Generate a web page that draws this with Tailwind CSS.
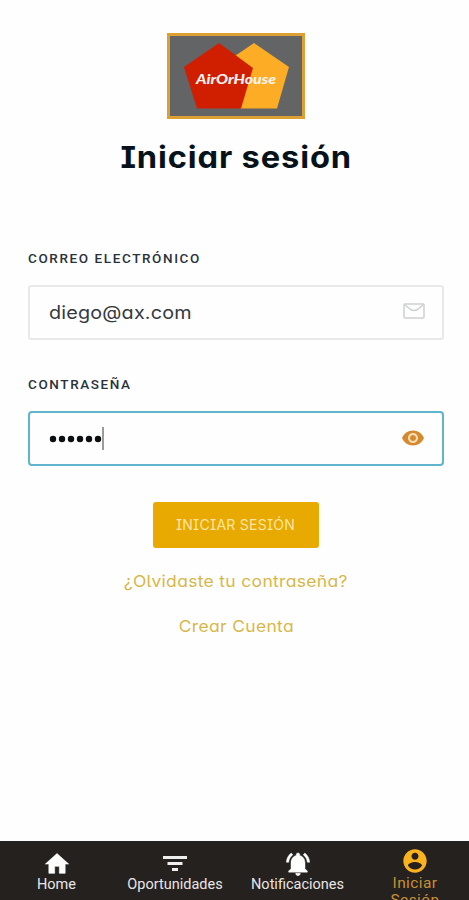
<!doctype html>
<html lang="es">
    <head>
        <meta charset="utf-8">
        <meta name="viewport" content="width=device-width, initial-scale=1">
        <title>Iniciar sesión</title>
        <script src="https://cdn.jsdelivr.net/npm/@tailwindcss/browser@4"></script>
    </head>
    <body class="bg-[#fefefe] font-['Inter',sans-serif] [font-feature-settings:'cv08','cv11']">
        <div class="flex flex-col h-[900px] overflow-hidden">
            <main class="flex-1 flex flex-col items-center pl-7 pr-[25px] pt-[33px]">
                <svg class="w-[138px] h-[86px] shrink-0" viewBox="0 0 138 86">
                    <rect x="1.5" y="1.5" width="135" height="83" fill="#636466" stroke="#dda032" stroke-width="3"/>
                    <path d="M87 10 122 34 110 75.5H73L62 27Z" fill="#fcac25"/>
                    <path d="M52 10 86 35 74 75.5H30L17 34Z" fill="#cf1f00"/>
                    <text x="29" y="51" textLength="80" lengthAdjust="spacingAndGlyphs" class="font-['Lato',sans-serif] font-black italic text-[13.5px]" fill="#fff4ee">AirOrHouse</text>
                </svg>
                <h1 class="mt-[18px] h-10 leading-10 whitespace-nowrap scale-x-107 text-[30.5px] font-bold tracking-[0.8px] text-[#07121b]">Iniciar sesión</h1>
                <form class="w-full mt-[71px] flex flex-col">
                    <label class="h-5 leading-5 font-['Roboto',sans-serif] font-medium text-[13.5px] tracking-[1.6px] text-[#29323a]">CORREO ELECTRÓNICO</label>
                    <div class="mt-[17px] h-[55px] flex items-center justify-between border-2 border-[#e9e9eb] rounded-[3px] pl-[19px] pr-[17px]">
                        <span class="origin-left scale-x-110 text-[18px] tracking-[0.15px] text-[#353a3f]">diego@ax.com</span>
                        <svg class="w-[22px] h-4 -mt-1" viewBox="0 0 22 16" fill="none" stroke="#cdcfd1" stroke-width="1.5">
                            <rect x="1" y="1" width="20" height="14" rx="1"/>
                            <path d="M2 2 7.5 6.5Q11 8.5 14.5 6.5L20 2"/>
                        </svg>
                    </div>
                    <label class="mt-[34px] h-5 leading-5 font-['Roboto',sans-serif] font-medium text-[13.5px] tracking-[1.6px] text-[#29323a]">CONTRASEÑA</label>
                    <div class="mt-[17px] h-[55px] flex items-center justify-between border-2 border-[#5fb5cd] rounded-[4px] pl-[19px] pr-[18px]">
                        <div class="flex items-center">
                            <svg class="w-[53px] h-2" viewBox="0 0 53 8" fill="#0c0f12">
                                <circle cx="4" cy="4" r="3.2"/>
                                <circle cx="13" cy="4" r="3.2"/>
                                <circle cx="22" cy="4" r="3.2"/>
                                <circle cx="31" cy="4" r="3.2"/>
                                <circle cx="40" cy="4" r="3.2"/>
                                <circle cx="49" cy="4" r="3.2"/>
                            </svg>
                            <span class="w-0.5 h-[23px] bg-[#9b9b9b]"></span>
                        </div>
                        <svg class="w-[22px] h-4 -mt-0.5" viewBox="1 4 22 16" preserveAspectRatio="none">
                            <circle cx="12" cy="12" r="6" fill="#f9dfb4"/>
                            <path fill="#d58a30" d="M12 4.5C7 4.5 2.73 7.61 1 12c1.73 4.39 6 7.5 11 7.5s9.27-3.11 11-7.5c-1.73-4.39-6-7.5-11-7.5zM12 17c-2.76 0-5-2.24-5-5s2.24-5 5-5 5 2.24 5 5-2.24 5-5 5zm0-8c-1.66 0-3 1.34-3 3s1.34 3 3 3 3-1.34 3-3-1.34-3-3-3z"/>
                        </svg>
                    </div>
                    <button type="button" class="self-center -ml-px mt-9 w-[166px] h-[46px] pb-0.5 bg-[#e8a900] rounded-[3px] text-[14px] tracking-[0.25px] text-[#fbe5a5]">INICIAR SESIÓN</button>
                </form>
                <a href="#" class="mt-[21px] h-6 leading-6 whitespace-nowrap scale-x-106 text-[16.5px] tracking-[0.3px] text-[#d6b84a] [font-feature-settings:'cv05','cv11']">¿Olvidaste tu contraseña?</a>
                <a href="#" class="mt-[21px] h-6 leading-6 whitespace-nowrap scale-x-106 text-[16.5px] tracking-[0.3px] text-[#d6b84a]">Crear Cuenta</a>
            </main>
            <nav class="h-[59px] shrink-0 overflow-hidden grid grid-cols-[113px_124px_121px_114px] bg-[#25211f] font-['Roboto',sans-serif] text-[14.5px] text-[#e8e6e4]">
                <a class="flex flex-col items-center pt-[9px]">
                    <svg class="w-7 h-7" viewBox="0 0 24 24" fill="#fff" stroke="#fff" stroke-width=".5"><path d="M10 20v-6h4v6h5v-8h3L12 3 2 12h3v8z"/></svg>
                    <span class="-mt-1 leading-[21px]">Home</span>
                </a>
                <a class="flex flex-col items-center pt-[9px]">
                    <svg class="w-7 h-7" viewBox="0 0 28 28" fill="#eee"><path d="M2 6h24v3H2zM6.5 12h15v3h-15zM11 18h6v3h-6z"/></svg>
                    <span class="-mt-1 leading-[21px]">Oportunidades</span>
                </a>
                <a class="flex flex-col items-center pt-[9px]">
                    <svg class="w-7 h-7" viewBox="0 0 24 24" fill="#fff" stroke="#fff" stroke-width=".4"><path d="M7.58 4.08 6.15 2.65C3.75 4.48 2.17 7.3 2.03 10.5h2c.15-2.65 1.51-4.97 3.55-6.42zm12.39 6.42h2c-.15-3.2-1.73-6.02-4.12-7.85l-1.42 1.43c2.02 1.45 3.39 3.77 3.54 6.42zM18 11c0-3.07-1.64-5.64-4.5-6.32V4c0-.83-.67-1.5-1.5-1.5s-1.5.67-1.5 1.5v.68C7.63 5.36 6 7.92 6 11v5l-2 2v1h16v-1l-2-2v-5zm-6 11c1.1 0 2-.9 2-2h-4c0 1.1.9 2 2 2z"/></svg>
                    <span class="-mt-1 leading-[21px]">Notificaciones</span>
                </a>
                <a class="flex flex-col items-center pt-1.5 text-[#c59035]">
                    <svg class="w-7 h-7" viewBox="0 0 24 24" fill="#fbb21f"><path d="M12 2C6.48 2 2 6.48 2 12s4.48 10 10 10 10-4.48 10-10S17.52 2 12 2zm0 3c1.66 0 3 1.34 3 3s-1.34 3-3 3-3-1.34-3-3 1.34-3 3-3zm0 14.2c-2.5 0-4.71-1.28-6-3.22.03-1.99 4-3.08 6-3.08s5.97 1.09 6 3.08c-1.29 1.94-3.5 3.22-6 3.22z"/></svg>
                    <span class="text-center text-[15.5px] tracking-[0.4px] leading-[17px]">Iniciar<br>Sesión</span>
                </a>
            </nav>
        </div>
    </body>
</html>
